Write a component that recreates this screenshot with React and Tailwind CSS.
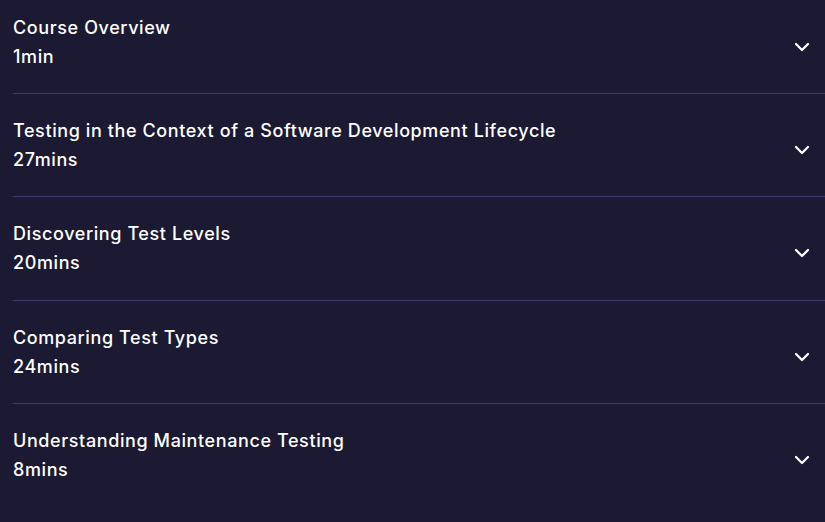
import { ChevronDown } from 'lucide-react';

const MODULES = [
  { title: 'Course Overview', duration: '1min', pad: 'pt-[13px] pb-[22px]' },
  { title: 'Testing in the Context of a Software Development Lifecycle', duration: '27mins', pad: 'border-t pt-[22px] pb-[22px]' },
  { title: 'Discovering Test Levels', duration: '20mins', pad: 'border-t pt-[22px] pb-[23px]' },
  { title: 'Comparing Test Types', duration: '24mins', pad: 'border-t pt-[22px] pb-[22px]' },
  { title: 'Understanding Maintenance Testing', duration: '8mins', pad: 'border-t pt-[22px] pb-[22px]' },
];

export default function App() {
  return (
    <div className="min-h-screen w-full bg-[#1b1a32] pl-[13px] text-white" style={{ fontFamily: 'Inter, "Open Sans", sans-serif' }}>
      {MODULES.map((m) => (
        <button
          key={m.title}
          className={`flex w-full items-center justify-between border-[#3d3b72] pr-[11px] text-left ${m.pad}`}
        >
          <div className="text-[18px] font-medium leading-[29px] tracking-[0.6px]">
            <div>{m.title}</div>
            <div>{m.duration}</div>
          </div>
          <ChevronDown size={24} strokeWidth={2.25} className="mt-[10px]" />
        </button>
      ))}
    </div>
  );
}
